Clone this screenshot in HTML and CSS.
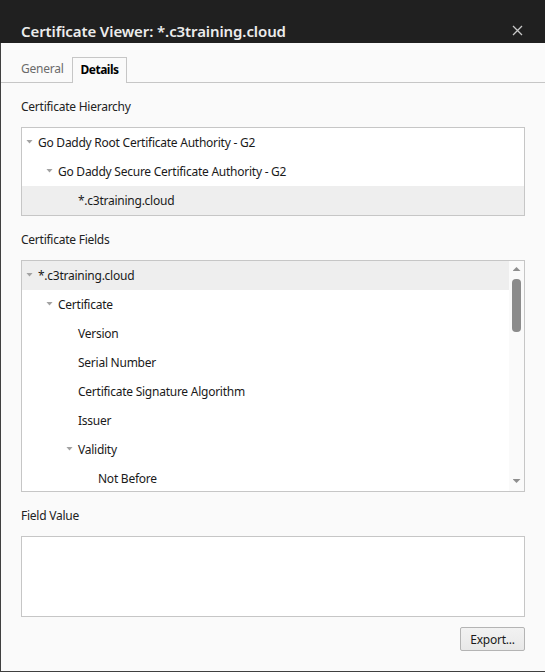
FILE: index.html
```html
<!DOCTYPE html>
<html>
<head>
<meta charset="utf-8">
<link rel="stylesheet" href="styles.css">
</head>
<body>
<div class="window">
  <header class="titlebar">
    <h1 class="title">Certificate Viewer: *.c3training.cloud</h1>
    <span class="close"><svg width="11" height="11" viewBox="0 0 11 11"><path d="M1 1 L10 10 M10 1 L1 10" stroke="#c8c8c8" stroke-width="1.3" fill="none"/></svg></span>
  </header>
  <div class="body">
    <nav class="tabs">
      <div class="tab">General</div>
      <div class="tab active">Details</div>
    </nav>
    <div class="content">
      <div class="label">Certificate Hierarchy</div>
      <div class="tree hierarchy">
        <div class="row l0"><span class="twisty open"></span><span class="text">Go Daddy Root Certificate Authority - G2</span></div>
        <div class="row l1"><span class="twisty open"></span><span class="text">Go Daddy Secure Certificate Authority - G2</span></div>
        <div class="row l2 selected"><span class="twisty"></span><span class="text">*.c3training.cloud</span></div>
      </div>
      <div class="label">Certificate Fields</div>
      <div class="tree fields">
        <div class="rows">
          <div class="row l0 selected"><span class="twisty open"></span><span class="text">*.c3training.cloud</span></div>
          <div class="row l1"><span class="twisty open"></span><span class="text">Certificate</span></div>
          <div class="row l2"><span class="twisty"></span><span class="text">Version</span></div>
          <div class="row l2"><span class="twisty"></span><span class="text">Serial Number</span></div>
          <div class="row l2"><span class="twisty"></span><span class="text">Certificate Signature Algorithm</span></div>
          <div class="row l2"><span class="twisty"></span><span class="text">Issuer</span></div>
          <div class="row l2"><span class="twisty open"></span><span class="text">Validity</span></div>
          <div class="row l3"><span class="twisty"></span><span class="text">Not Before</span></div>
        </div>
        <div class="scrollbar">
          <span class="arrow up"></span>
          <span class="thumb"></span>
          <span class="spacer"></span>
          <span class="arrow down"></span>
        </div>
      </div>
      <div class="label">Field Value</div>
      <div class="valuebox"></div>
      <div class="actions"><button class="btn">Export...</button></div>
    </div>
  </div>
</div>
</body>
</html>
```
FILE: styles.css
```css
* { box-sizing: border-box; }
html, body { margin: 0; padding: 0; }
body {
  width: 545px;
  height: 672px;
  background: #fafafa;
  font-family: "Noto Sans", "Open Sans", sans-serif;
  font-size: 12px;
  letter-spacing: -0.25px;
  color: #1a1a1a;
  overflow: hidden;
}
.window {
  width: 545px;
  height: 672px;
  display: flex;
  flex-direction: column;
  border-bottom: 1px solid #3f3f3f;
}
.titlebar {
  height: 43px;
  background: #202020;
  display: flex;
  align-items: flex-start;
  justify-content: space-between;
  padding: 20px 22px 0 21px;
  flex: none;
}
.title {
  margin: 0;
  font-size: 15px;
  line-height: 22px;
  font-weight: 600;
  letter-spacing: -0.1px;
  color: #ececec;
}
.close {
  display: flex;
  width: 11px;
  height: 11px;
  margin-top: 5px;
}
.body {
  flex: 1;
  border-left: 1px solid #404040;
  display: flex;
  flex-direction: column;
}
.tabs {
  margin-top: 14px;
  display: flex;
  align-items: flex-end;
  padding-left: 11px;
  border-bottom: 1px solid #c6c6c6;
  height: 26px;
}
.tab {
  height: 25px;
  line-height: 24px;
  padding: 0 9px;
  color: #6a6a6a;
}
.tab.active {
  border: 1px solid #c6c6c6;
  border-bottom: none;
  background: #fafafa;
  margin-bottom: -1px;
  height: 26px;
  padding: 0 7px;
  letter-spacing: -0.5px;
  color: #000;
  font-weight: 700;
}
.content {
  padding: 0 20px;
  display: flex;
  flex-direction: column;
}
.label {
  margin-top: 14px;
  margin-bottom: 10px;
  line-height: 20px;
  color: #222;
}
.tree {
  background: #fff;
  border: 1px solid #c6c6c6;
}
.hierarchy { height: 89px; }
.fields {
  height: 232px;
  display: flex;
}
.rows {
  flex: 1;
  overflow: hidden;
}
.row {
  height: 29px;
  display: flex;
  align-items: center;
  white-space: nowrap;
}
.row.selected { background: #eeeeee; }
.l0 { padding-left: 4px; }
.l1 { padding-left: 24px; }
.l2 { padding-left: 44px; }
.l3 { padding-left: 64px; }
.twisty {
  width: 12px;
  flex: none;
  display: flex;
  align-items: center;
}
.twisty.open::before {
  content: "";
  width: 7px;
  height: 4px;
  background: #a2a2a2;
  clip-path: polygon(0 0, 100% 0, 50% 100%);
  margin-top: -2px;
}
.scrollbar {
  width: 15px;
  flex: none;
  background: #fafafa;
  display: flex;
  flex-direction: column;
  align-items: center;
  padding: 6px 0 8px;
}
.arrow {
  width: 8px;
  height: 4px;
  background: #8e8e8e;
}
.arrow.up { clip-path: polygon(50% 0, 100% 100%, 0 100%); }
.arrow.down { clip-path: polygon(0 0, 100% 0, 50% 100%); }
.thumb {
  width: 9px;
  height: 53px;
  margin-top: 8px;
  border-radius: 4px;
  background: #8b8b8b;
}
.spacer { flex: 1; }
.valuebox {
  height: 81px;
  background: #fff;
  border: 1px solid #c6c6c6;
}
.actions {
  display: flex;
  justify-content: flex-end;
  margin-top: 10px;
}
.btn {
  width: 65px;
  height: 24px;
  font-family: inherit;
  font-size: 12px;
  letter-spacing: -0.25px;
  color: #1a1a1a;
  background: linear-gradient(#f2f2f2, #e8e8e8);
  border: 1px solid #b4b4b4;
  border-radius: 2px;
  padding: 0;
}
```
